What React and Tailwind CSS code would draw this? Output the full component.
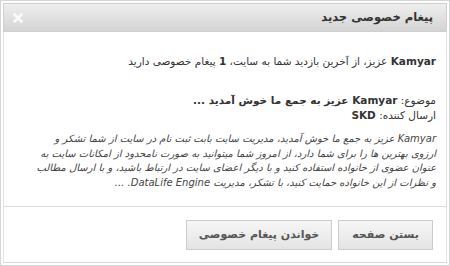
export default function App() {
  return (
    <div className="w-[450px] h-[266px] bg-white border border-[#d5d5d5] p-[2px] flex flex-col" dir="rtl" style={{ fontFamily: '"DejaVu Sans", sans-serif' }}>
      <div className="h-[29px] flex items-center justify-between pr-[13px] pl-[8px] bg-gradient-to-b from-[#eeeeee] to-[#d4d4d4] border border-[#cfcfcf]">
        <span className="text-[11.5px] font-bold text-[#333]">پیغام خصوصی جدید</span>
        <svg width="12" height="12" viewBox="0 0 12 12">
          <path d="M2.5 2.5 L9.5 9.5 M9.5 2.5 L2.5 9.5" stroke="#fafafa" strokeWidth="2.8" strokeLinecap="round" />
        </svg>
      </div>

      <div className="flex-1 flex flex-col border-x border-[#e2e2e2] text-[#333] text-[10.5px] px-[10px]">
        <p className="mt-[22px] leading-[15px]">
          <b>Kamyar</b> عزیز، از آخرین بازدید شما به سایت، <b>1</b> پیغام خصوصی دارید
        </p>
        <div className="mt-[24px] leading-[15px]">
          <p>موضوع: <b>Kamyar عزیز به جمع ما خوش آمدید ...</b></p>
          <p>ارسال کننده: <b>SKD</b></p>
        </div>
        <p className="mt-[9px] leading-[14.7px] italic text-[#444] text-[10px] whitespace-nowrap">
          Kamyar عزیز به جمع ما خوش آمدید، مدیریت سایت بابت ثبت نام در سایت از شما تشکر و
          <br />
          ارزوی بهترین ها را برای شما دارد، از امروز شما میتوانید به صورت نامحدود از امکانات سایت به
          <br />
          عنوان عضوی از خانواده استفاده کنید و با دیگر اعضای سایت در ارتباط باشید، و با ارسال مطالب
          <br />
          و نظرات از این خانواده حمایت کنید، با تشکر، مدیریت DataLife Engine. ...
        </p>
      </div>

      <div className="h-[57px] border border-t-[#dcdcdc] border-x-[#e2e2e2] border-b-[#d9d9d9] flex items-start gap-[6px] pt-[13px] pr-[13px]">
        <button className="h-[30px] w-[95px] border border-[#cccccc] bg-gradient-to-b from-[#f6f6f6] to-[#e4e4e4] text-[11px] font-bold text-[#555]">
          بستن صفحه
        </button>
        <button className="h-[30px] w-[146px] border border-[#cccccc] bg-gradient-to-b from-[#f6f6f6] to-[#e4e4e4] text-[11px] font-bold text-[#555]">
          خواندن پیغام خصوصی
        </button>
      </div>
    </div>
  );
}
